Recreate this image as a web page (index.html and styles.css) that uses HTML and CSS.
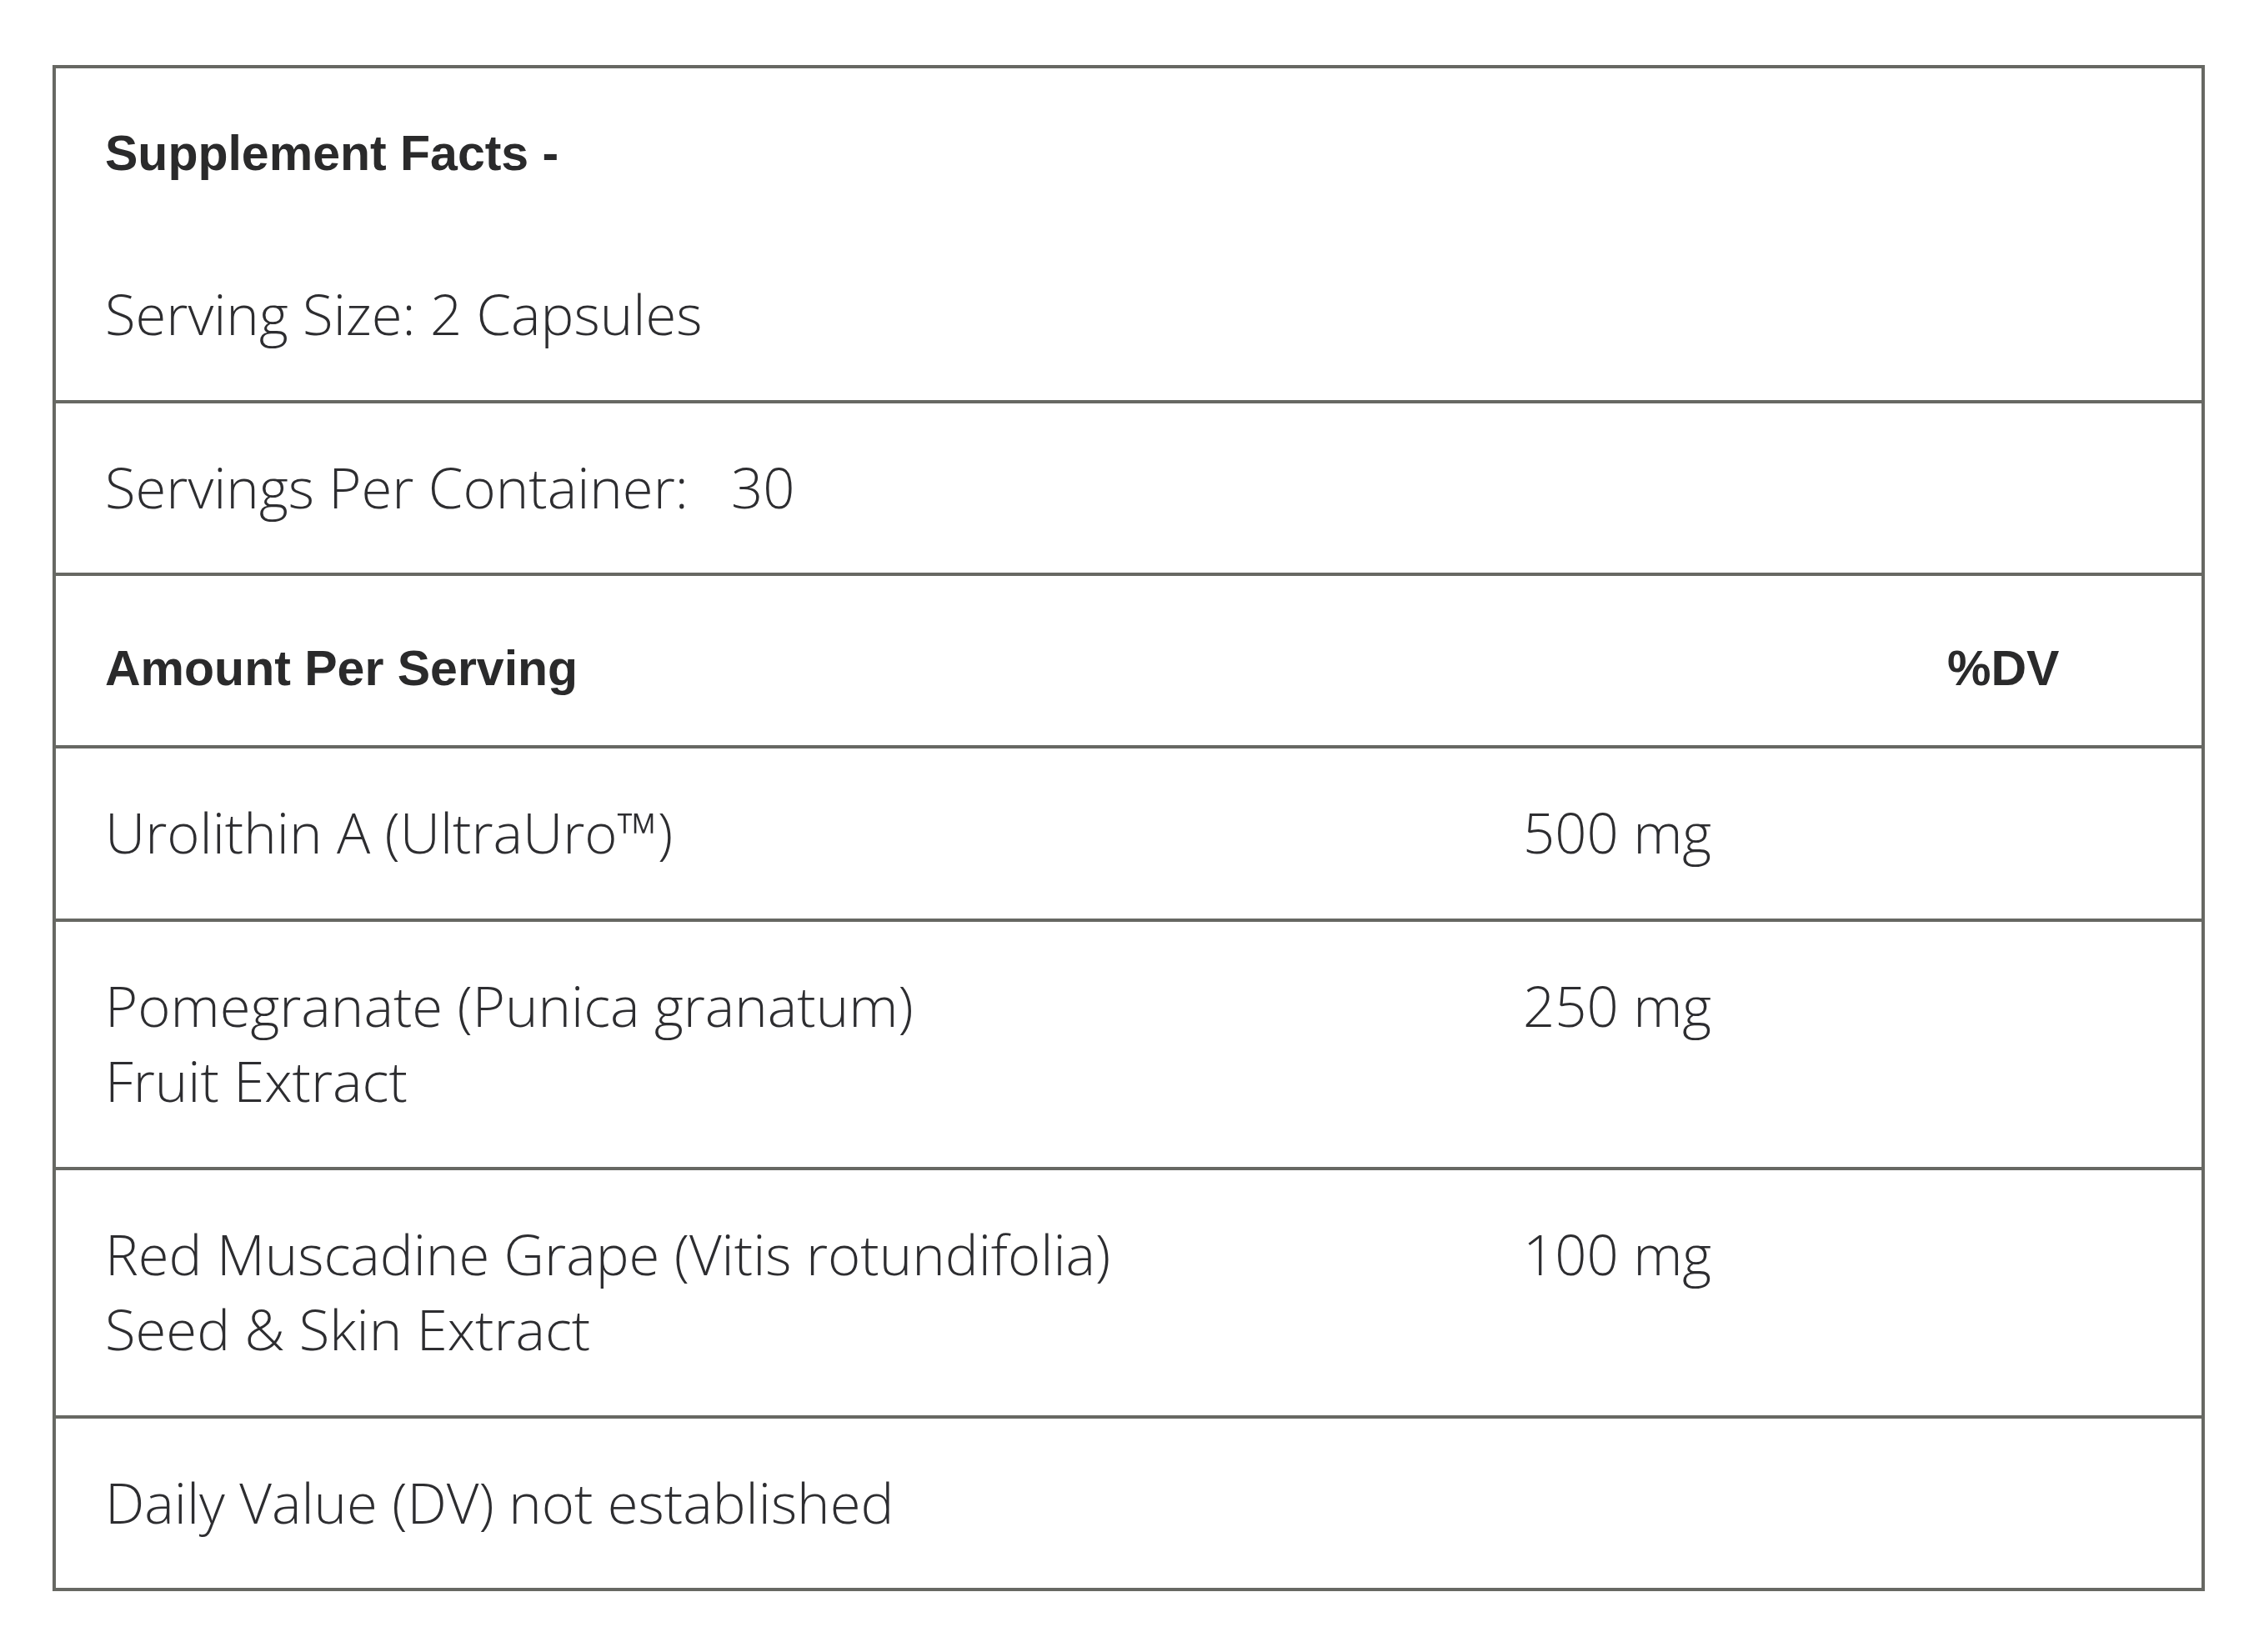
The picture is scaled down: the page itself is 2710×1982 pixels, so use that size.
FILE: index.html
```html
<!DOCTYPE html>
<html lang="en">
<head>
<meta charset="utf-8">
<title>Supplement Facts</title>
<link rel="stylesheet" href="styles.css">
</head>
<body>
<div class="facts">
  <div class="row row-top">
    <div class="title">Supplement Facts -</div>
    <div class="serving">Serving Size: 2 Capsules</div>
  </div>
  <div class="row">
    <div class="name">Servings Per Container: <span class="count">30</span></div>
  </div>
  <div class="row row-head">
    <div class="name">Amount Per Serving</div>
    <div class="amount"></div>
    <div class="dv">%DV</div>
  </div>
  <div class="row row-tall">
    <div class="name">Urolithin A (UltraUro™)</div>
    <div class="amount">500 mg</div>
    <div class="dv"></div>
  </div>
  <div class="row row-tall">
    <div class="name">Pomegranate (Punica granatum)<br>Fruit Extract</div>
    <div class="amount">250 mg</div>
    <div class="dv"></div>
  </div>
  <div class="row row-tall">
    <div class="name">Red Muscadine Grape (Vitis rotundifolia)<br>Seed &amp; Skin Extract</div>
    <div class="amount">100 mg</div>
    <div class="dv"></div>
  </div>
  <div class="row">
    <div class="name">Daily Value (DV) not established</div>
  </div>
</div>
</body>
</html>
```

FILE: styles.css
```css
html, body {
  margin: 0;
  padding: 0;
  background: #ffffff;
}

body {
  font-family: "Open Sans", "Liberation Sans", sans-serif;
  font-weight: 300;
  font-size: 67px;
  line-height: 90px;
  color: #2d2d30;
}

.facts {
  box-sizing: border-box;
  width: 2582px;
  margin: 78px 0 0 63px;
  border: 4px solid #676863;
}

.row {
  display: grid;
  grid-template-columns: 1701px 509px 1fr;
  padding: 55px 0 58px 59px;
  border-top: 4px solid #676863;
}

.row:first-child {
  border-top: none;
}

.row-tall {
  padding-bottom: 59px;
}

.row-top {
  display: flex;
  flex-direction: column;
  gap: 102px;
  padding: 57px 0 59px 59px;
}

.title,
.row-head {
  font-family: "Liberation Sans", Arial, sans-serif;
  font-weight: 700;
  font-size: 59px;
  color: #2a2a2b;
}

.row-head {
  padding-top: 66px;
  padding-bottom: 47px;
}

.count {
  margin-left: 34px;
}

.amount,
.dv {
  white-space: nowrap;
}
```
